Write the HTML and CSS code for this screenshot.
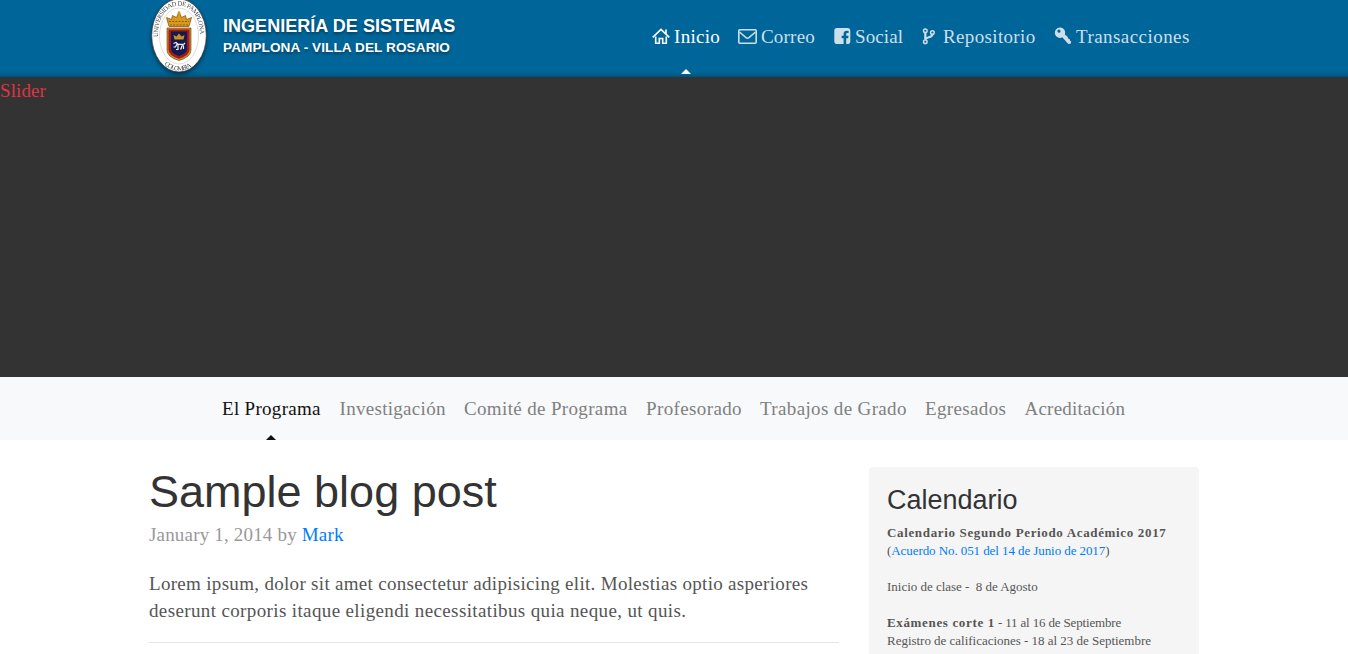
FILE: index.html
```html
<!DOCTYPE html>
<html lang="es">
<head>
<meta charset="utf-8">
<title>Ingeniería de Sistemas</title>
<link rel="stylesheet" href="styles.css">
</head>
<body>
<header class="masthead">
  <div class="container masthead-inner">
    <a class="brand">
      <svg class="crest" width="60" height="77" viewBox="0 0 60 77">
        <defs>
          <path id="arc-top" d="M9 37 C8.500 17 18 5.500 30 5.500 C42 5.500 51.500 17 51 37"/>
          <path id="arc-bottom" d="M13.500 62 C22 73.500 38 73.500 46.500 62"/>
        </defs>
        <ellipse class="crest-oval" cx="30" cy="35.500" rx="27.300" ry="36.500"/>
        <ellipse cx="30" cy="36" rx="19.500" ry="28" fill="none" stroke="#bbb" stroke-width=".5"/>
        <text class="crest-text"><textPath href="#arc-top" textLength="82">UNIVERSIDAD DE PAMPLONA</textPath></text>
        <text class="crest-text"><textPath href="#arc-bottom" startOffset="3" textLength="30">COLOMBIA</textPath></text>
        <path d="M20 26.500 17.500 17.500 22.500 19.500 23.500 15.500 27.500 17.500 30 11.500 32.500 17.500 36.500 15.500 37.500 19.500 42.500 17.500 40 26.500Z" fill="#d99a1c" stroke="#7c4b12" stroke-width=".7"/>
        <path d="M20 21.500H40M21 25H39" stroke="#7c4b12" stroke-width=".8" stroke-dasharray="2 1.200"/>
        <circle cx="30" cy="13" r="1.500" fill="#d99a1c"/>
        <path d="M18 28H42V50Q42 57 30 60.500 18 57 18 50Z" fill="#c9911f" stroke="#6c3512" stroke-width=".6"/>
        <path d="M19.500 29.500H40.500V49.500Q40.500 55.500 30 58.800 19.500 55.500 19.500 49.500Z" fill="#a3181f"/>
        <path d="M22 31.500H38V48.500Q38 53.500 30 56 22 53.500 22 48.500Z" fill="#14194f"/>
        <path d="M25.500 39.500 24.500 35 27.500 36.500 30 33.500 32.500 36.500 35.500 35 34.500 39.500Z" fill="#c98f22"/>
        <path d="M24.500 43.500 27 42.500 29 44.300H33.500L34.500 46.500V49M28 44 26.500 47H24.500M29 45V49.500H27M33 45.500 32 49H31M34.500 44.500 36 43" fill="none" stroke="#eee" stroke-width="1.200"/>
      </svg>
      <span class="brand-text"><span class="brand-title">INGENIERÍA DE SISTEMAS</span><span class="brand-sub">PAMPLONA - VILLA DEL ROSARIO</span></span>
    </a>
    <nav class="nav-top">
      <a class="top-link top-home active"><svg class="icon" width="18" height="18" viewBox="0 0 18 18"><path d="M.7 9.300 9 1.300 17.300 9.300M14 5.500V1.500" fill="none" stroke="currentColor" stroke-width="1.600"/><path d="M3.700 8.500V15.200H7.300V10.500H10.700V15.200H14.300V8.500" fill="none" stroke="currentColor" stroke-width="1.600"/></svg><span>Inicio</span></a>
      <a class="top-link top-mail"><svg class="icon" width="19" height="18" viewBox="0 0 19 18"><rect x=".8" y="1.800" width="17.400" height="13.400" rx="1" fill="none" stroke="currentColor" stroke-width="1.600"/><path d="M1.500 4 8 9.600Q9.500 10.800 11 9.600L17.500 4" fill="none" stroke="currentColor" stroke-width="1.500"/></svg><span>Correo</span></a>
      <a class="top-link top-social"><svg class="icon" width="17" height="18" viewBox="0 0 17 18"><path d="M3 0H13.500Q16.300 0 16.300 2.800V13.200Q16.300 16 13.500 16H12.200V10.300H14.200L14.500 7.700H12.200V6.200Q12.200 5.100 13.300 5.100H14.600V2.900Q9.600 2 9.600 5.900V7.700H7.600V10.300H9.600V16H3.100Q.3 16 .3 13.200V2.800Q.3 0 3 0Z" fill="currentColor"/></svg><span>Social</span></a>
      <a class="top-link top-repo"><svg class="icon" width="14" height="18" viewBox="0 0 14 18"><g fill="none" stroke="currentColor"><circle cx="4.300" cy="2.700" r="1.800" stroke-width="1.500"/><circle cx="4.300" cy="13.700" r="1.800" stroke-width="1.500"/><circle cx="11.400" cy="4.500" r="1.800" stroke-width="1.500"/><path d="M4.300 4.700V11.700M11.300 6.500C11.300 10 4.500 8.500 4.500 11.700" stroke-width="2.200"/></g></svg><span>Repositorio</span></a>
      <a class="top-link top-key"><svg class="icon" width="17" height="18" viewBox="0 0 17 18"><path fill-rule="evenodd" d="M5.500-.5A5.200 5.200 0 1 0 7.300 9.300L13.300 15.900 15.500 15.700 16.300 13.700 14.900 12.600 14.600 10.900 13.100 10.500 12.600 8.800 9.900 6.600A5.200 5.200 0 0 0 5.500-.5ZM4 1.500A1.600 1.600 0 1 1 3.900 4.700 1.600 1.600 0 0 1 4 1.500Z" fill="currentColor"/></svg><span>Transacciones</span></a>
    </nav>
  </div>
</header>
<section class="slider">Slider</section>
<nav class="nav-sub">
  <a class="sub-link sub-1 active">El Programa</a>
  <a class="sub-link sub-2">Investigación</a>
  <a class="sub-link sub-3">Comité de Programa</a>
  <a class="sub-link sub-4">Profesorado</a>
  <a class="sub-link sub-5">Trabajos de Grado</a>
  <a class="sub-link sub-6">Egresados</a>
  <a class="sub-link sub-7">Acreditación</a>
</nav>
<main class="container content">
  <article class="post">
    <h1 class="post-title">Sample blog post</h1>
    <p class="post-meta">January 1, 2014 by <a class="link">Mark</a></p>
    <p class="post-text">Lorem ipsum, dolor sit amet consectetur adipisicing elit. Molestias optio asperiores<br><span class="second">deserunt corporis itaque eligendi necessitatibus quia neque, ut quis.</span></p>
    <hr class="rule">
  </article>
  <aside class="calendar">
    <h4 class="calendar-title">Calendario</h4>
    <p class="calendar-text"><b>Calendario Segundo Periodo Académico 2017</b><br>(<a class="link">Acuerdo No. 051 del 14 de Junio de 2017</a>)<br><br>Inicio de clase -&nbsp; 8 de Agosto<br><br><b>Exámenes corte 1</b><span class="exam-dates"> - 11 al 16 de Septiembre</span><br>Registro de calificaciones - 18 al 23 de Septiembre</p>
  </aside>
</main>
</body>
</html>
```
FILE: styles.css
```css
* { box-sizing: border-box; }
body {
  margin: 0;
  height: 654px;
  overflow: hidden;
  background: #fff;
  color: #555;
  font: 19px/27px Georgia, "Liberation Serif", serif;
  letter-spacing: .3px;
}
.container { width: 1050px; margin-left: 149px; }
.masthead { height: 77px; background: #069; box-shadow: inset 0 -6px 5px -5px rgba(0, 0, 0, .3); }
.masthead-inner { display: flex; justify-content: space-between; }
.brand { display: flex; color: #fff; font-family: "Liberation Sans", Arial, sans-serif; font-weight: bold; letter-spacing: 0; }
.crest { display: block; margin-right: 14px; filter: drop-shadow(0 2px 2px rgba(0, 0, 0, .5)); }
.crest-oval { fill: #fff; stroke: #333; stroke-width: .7; }
.crest-text { font: 6.500px "Liberation Serif", serif; fill: #444; }
.brand-text { display: flex; flex-direction: column; padding-top: 15px; text-shadow: 0 2px 3px rgba(0, 0, 0, .4); white-space: nowrap; }
.brand-title { font-size: 18px; line-height: 22px; letter-spacing: .04px; }
.brand-sub { font-size: 13.600px; line-height: 21px; letter-spacing: .07px; }
.nav-top { display: flex; color: #cddfeb; }
.top-link { position: relative; display: flex; padding: 23px 0 0 9px; height: 77px; white-space: nowrap; }
.icon { flex: none; margin-top: 5px; overflow: visible; }
.top-home { width: 86px; gap: 4px; }
.top-mail { width: 96px; gap: 4px; letter-spacing: .2px; }
.top-social { width: 87px; gap: 4px; letter-spacing: .1px; }
.top-repo { width: 134px; gap: 8px; letter-spacing: .35px; }
.top-key { width: 153px; gap: 4px; letter-spacing: .45px; }
.top-link.active { color: #fff; }
.top-link.active::after, .sub-link.active::after {
  content: "";
  position: absolute;
  bottom: 3px;
  left: 38px;
  border: 5px solid transparent;
  border-top: 0;
  border-bottom-color: currentColor;
}
.slider { height: 300px; background: #333; color: #dc3545; letter-spacing: .1px; }
.nav-sub { display: flex; height: 63px; padding: 18px 0 0 222px; background: #f8f9fa; color: #7f8081; white-space: nowrap; }
.sub-link { position: relative; height: 45px; }
.sub-link.active { color: #111; }
.sub-link.active::after { left: 44px; bottom: 0; }
.sub-1 { width: 117.500px; }
.sub-2 { width: 124.500px; }
.sub-3 { width: 182px; letter-spacing: .35px; }
.sub-4 { width: 114px; letter-spacing: .38px; }
.sub-5 { width: 165px; letter-spacing: .36px; }
.sub-6 { width: 99.500px; letter-spacing: .35px; }
.sub-7 { letter-spacing: .22px; }
.content { display: flex; justify-content: space-between; padding-top: 27px; }
.post { width: 690px; }
.post-title { margin: 0; color: #333; font: 45px/50px "Liberation Sans", Arial, sans-serif; letter-spacing: 0; }
.post-meta { margin: 4px 0 22px; color: #999; letter-spacing: .18px; }
.post-text { margin: 0; white-space: nowrap; letter-spacing: .31px; }
.second { letter-spacing: .37px; }
.link { color: #007bff; }
.rule { margin: 18px 0 0; border: 0; border-top: 1px solid #e5e5e5; }
.calendar { width: 330px; height: 187px; padding: 18px 18px 0; border-radius: 4px 4px 0 0; background: #f5f5f5; }
.calendar-title { margin: 0 0 9px; color: #333; font: 27px/30px "Liberation Sans", Arial, sans-serif; letter-spacing: 0; }
.calendar-text { margin: 0; font-size: 13px; line-height: 18px; letter-spacing: -.02px; white-space: nowrap; }
.calendar-text b { letter-spacing: .65px; }
.calendar-text .link { letter-spacing: -.08px; }
.exam-dates { letter-spacing: -.16px; }
```
